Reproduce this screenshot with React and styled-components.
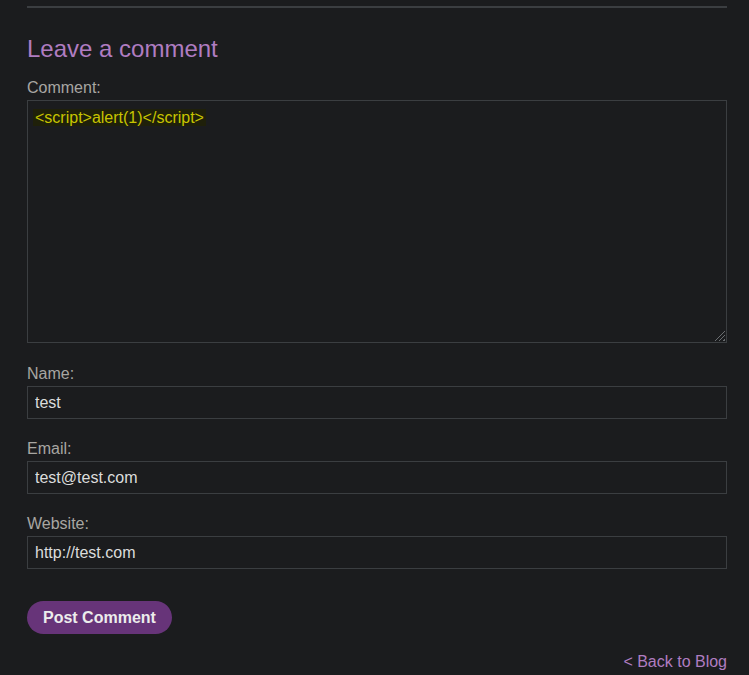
import styled, { createGlobalStyle } from "styled-components";

const GlobalStyle = createGlobalStyle`
  html, body {
    margin: 0;
    background: #1b1c1e;
  }
  body {
    font-family: "Liberation Sans", Arial, sans-serif;
    color: #a9a9a9;
  }
`;

const Page = styled.div`
  padding: 6px 22px 0 27px;
  height: 675px;
  box-sizing: border-box;
  overflow: hidden;
`;

const Divider = styled.hr`
  margin: 0;
  border: 0;
  border-top: 2px solid #3b3e41;
`;

const Heading = styled.h2`
  margin: 26px 0 15px;
  font-size: 24px;
  font-weight: normal;
  line-height: 30px;
  color: #b07cc1;
`;

const Field = styled.div`
  display: flex;
  flex-direction: column;
  margin-bottom: ${({ $gap }) => $gap || 21}px;
`;

const Label = styled.label`
  font-size: 16px;
  line-height: 18px;
  color: #a8a6a2;
  margin-bottom: 3px;
`;

const Input = styled.input`
  box-sizing: border-box;
  height: 33px;
  width: 100%;
  padding: 0 7px;
  border: 1px solid #3b3e41;
  background: #1b1c1e;
  color: #dcdcdc;
  font-family: inherit;
  font-size: 16px;
  outline: none;
`;

const CommentBox = styled.div`
  position: relative;
  box-sizing: border-box;
  height: 243px;
  padding: 8px 5px;
  border: 1px solid #3b3e41;
  font-size: 16px;
  line-height: 18px;

  &::after {
    content: "";
    position: absolute;
    right: 1px;
    bottom: 1px;
    width: 11px;
    height: 11px;
    background: repeating-linear-gradient(
      135deg,
      transparent 0 2px,
      #6a6d70 2px 3px
    );
    clip-path: polygon(100% 0, 100% 100%, 0 100%);
  }
`;

const Mark = styled.span`
  background: #1f200a;
  color: #c8c400;
  padding: 0 2px 0 2px;
`;

const Button = styled.button`
  margin-top: 11px;
  height: 33px;
  padding: 0 16px;
  border: 0;
  border-radius: 17px;
  background: #673479;
  color: #ececec;
  font-family: inherit;
  font-size: 16px;
  font-weight: bold;
  cursor: pointer;
`;

const BackLink = styled.a`
  display: block;
  text-align: right;
  margin-top: 19px;
  font-size: 16px;
  line-height: 18px;
  color: #b07cc1;
  text-decoration: none;
`;

const App = () => {
  return (
    <>
      <GlobalStyle />
      <Page>
        <Divider />
        <Heading>Leave a comment</Heading>
        <Field $gap={22}>
          <Label>Comment:</Label>
          <CommentBox>
            <Mark>&lt;script&gt;alert(1)&lt;/script&gt;</Mark>
          </CommentBox>
        </Field>
        <Field>
          <Label>Name:</Label>
          <Input defaultValue="test" />
        </Field>
        <Field>
          <Label>Email:</Label>
          <Input defaultValue="test@test.com" />
        </Field>
        <Field>
          <Label>Website:</Label>
          <Input defaultValue="http://test.com" />
        </Field>
        <Button>Post Comment</Button>
        <BackLink href="#">&lt; Back to Blog</BackLink>
      </Page>
    </>
  );
};

export default App;
